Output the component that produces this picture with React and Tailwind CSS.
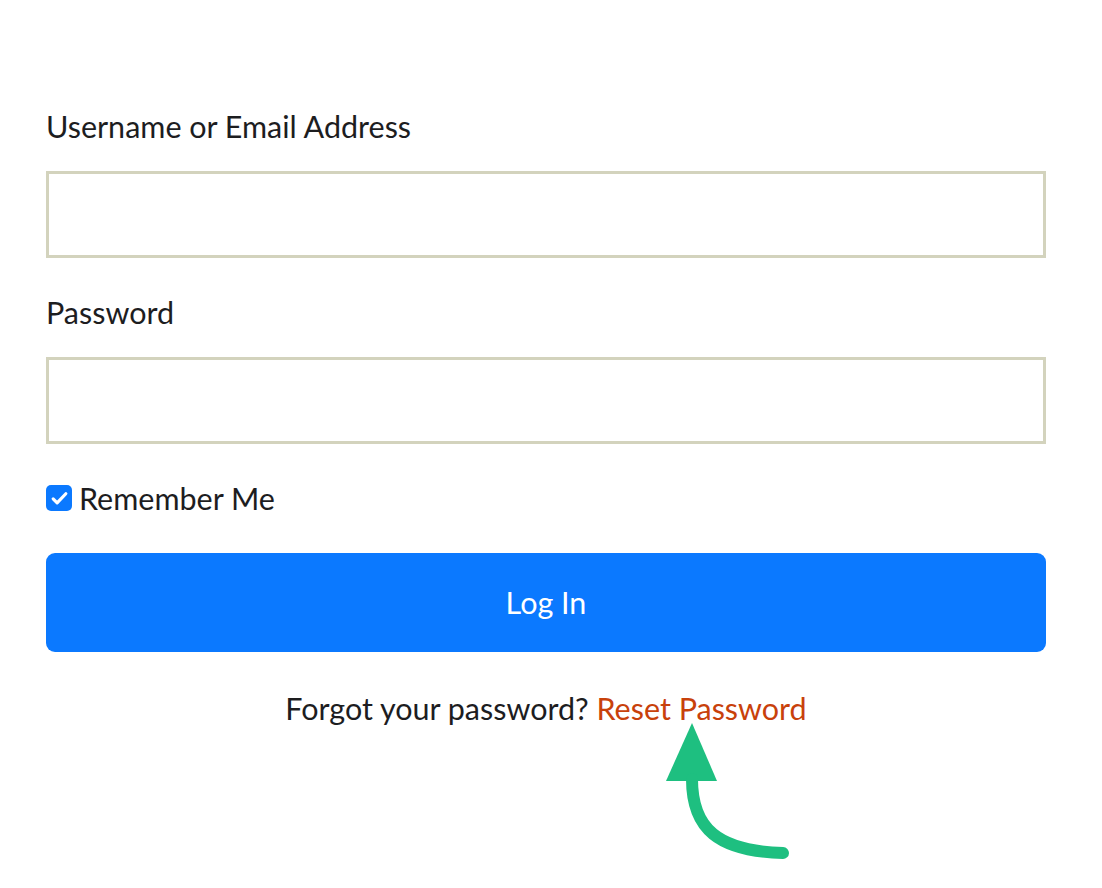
export default function App() {
  const font = { fontFamily: 'Lato, "Noto Sans", sans-serif' };
  return (
    <div className="min-h-[888px] w-[1102px] bg-white text-[#1d1d1f]" style={font}>
      <form className="pl-[46px] pt-[105px] w-[1046px]" onSubmit={e => e.preventDefault()}>
        <label className="block h-[42px] leading-[42px] text-[30.5px]">Username or Email Address</label>
        <input
          type="text"
          className="mt-[24px] block w-[1000px] h-[87px] border-[3px] border-[#d3d3bd] bg-white outline-none px-4 text-[28px]"
        />
        <label className="mt-[33px] block h-[42px] leading-[42px] text-[30.5px]">Password</label>
        <input
          type="password"
          className="mt-[24px] block w-[1000px] h-[87px] border-[3px] border-[#d3d3bd] bg-white outline-none px-4 text-[28px]"
        />

        <div className="mt-[33px] h-[42px] flex items-center gap-[7px]">
          <span className="w-[26px] h-[26px] rounded-[5px] bg-[#0b79ff] flex items-center justify-center">
            <svg width="19" height="19" viewBox="0 0 24 24" fill="none" stroke="white" strokeWidth="4" strokeLinecap="round" strokeLinejoin="round">
              <path d="M4 12.5l5 5L20 6" />
            </svg>
          </span>
          <span className="text-[30.5px] leading-[42px]">Remember Me</span>
        </div>

        <button
          type="submit"
          className="mt-[34px] w-[1000px] h-[99px] rounded-[9px] bg-[#0b79ff] text-white text-[30.5px] flex items-center justify-center"
        >
          Log In
        </button>

        <div className="relative mt-[35px] w-[1000px] text-center h-[42px] leading-[42px] text-[30.5px]">
          Forgot your password? <a href="#" className="text-[#c8410b]">Reset Password</a>
          <svg
            className="absolute left-[600px] top-[30px]"
            width="150"
            height="150"
            viewBox="0 0 150 150"
            fill="none"
          >
            <polygon points="46,6 20,64 71,64" fill="#1ebf80" />
            <path d="M46 62 C46 112 72 134 137 136" stroke="#1ebf80" strokeWidth="12" strokeLinecap="round" />
          </svg>
        </div>
      </form>
    </div>
  );
}
